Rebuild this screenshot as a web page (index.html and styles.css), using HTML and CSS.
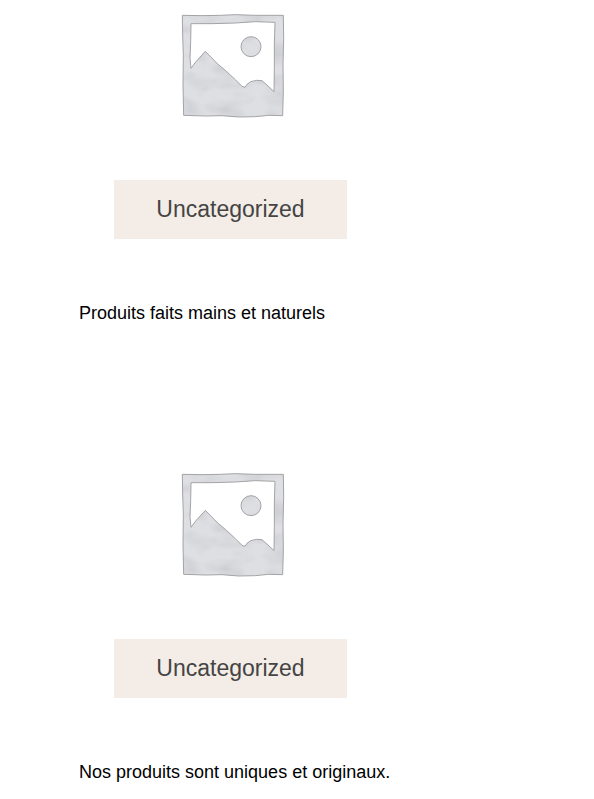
FILE: index.html
```
<!DOCTYPE html>
<html lang="fr">
<head>
<meta charset="utf-8">
<meta name="viewport" content="width=device-width, initial-scale=1">
<title>Produits</title>
<link rel="stylesheet" href="styles.css">
</head>
<body>
<svg class="defs" width="0" height="0" aria-hidden="true">
  <defs>
    <filter id="wash" x="0" y="0" width="100%" height="100%" color-interpolation-filters="sRGB">
      <feTurbulence type="fractalNoise" baseFrequency="0.014 0.024" numOctaves="2" seed="4" result="noise"/>
      <feColorMatrix in="noise" type="matrix" values="0 0 0 0 0.8  0 0 0 0 0.805  0 0 0 0 0.825  2 0 0 0 -0.8" result="cloud"/>
      <feComposite in="cloud" in2="SourceGraphic" operator="in" result="tint"/>
      <feMerge><feMergeNode in="SourceGraphic"/><feMergeNode in="tint"/></feMerge>
    </filter>
    <symbol id="placeholder" viewBox="12 27 327 312">
      <g fill="#dedfe3" fill-rule="evenodd" filter="url(#wash)">
        <path d="M31 31 L90 32 L145 31 L190 29 L250 31 L334 31 L335 100 L333 180 L334 260 L332 332 L290 331 L250 335 L200 336 L150 332 L100 333 L35 331 L33 240 L34 150 L32 90 Z M57 56 L56 110 L54 160 L57 190 L71 171 L100 139 L137 177 L160 196 L190 224 L210 244 L219 247 L225 238 L236 230 L254 226 L270 227 L288 243 L306 260 L307 190 L307 120 L309 52 L250 50 L190 54 L120 56 Z"/>
        <circle cx="237" cy="125" r="30"/>
      </g>
      <g fill="none" stroke="#a4a4a7" stroke-width="3" stroke-linejoin="round">
        <path d="M31 31 L90 32 L145 31 L190 29 L250 31 L334 31 L335 100 L333 180 L334 260 L332 332 L290 331 L250 335 L200 336 L150 332 L100 333 L35 331 L33 240 L34 150 L32 90 Z"/>
        <path d="M57 56 L56 110 L54 160 L57 190 L71 171 L100 139 L137 177 L160 196 L190 224 L210 244 L219 247 L225 238 L236 230 L254 226 L270 227 L288 243 L306 260 L307 190 L307 120 L309 52 L250 50 L190 54 L120 56 Z"/>
        <circle cx="237" cy="125" r="30"/>
      </g>
    </symbol>
  </defs>
</svg>
<main class="products">
  <article class="product">
    <svg class="picture" role="img" aria-label="Uncategorized"><use href="#placeholder"/></svg>
    <a class="category" href="#">Uncategorized</a>
    <p class="caption">Produits faits mains et naturels</p>
  </article>
  <article class="product">
    <svg class="picture" role="img" aria-label="Uncategorized"><use href="#placeholder"/></svg>
    <a class="category" href="#">Uncategorized</a>
    <p class="caption">Nos produits sont uniques et originaux.</p>
  </article>
</main>
</body>
</html>
```
FILE: styles.css
```
* {
  box-sizing: border-box;
}

body {
  margin: 0;
  background: #fff;
  color: #000;
  font-family: "Liberation Sans", Arial, sans-serif;
}

.defs {
  display: block;
}

.products {
  display: flex;
  flex-direction: column;
  gap: 147px;
  max-width: 382px;
  padding: 14px 0 14px 79px;
}

.product {
  display: flex;
  flex-direction: column;
  align-items: center;
}

.picture {
  display: block;
  width: 109px;
  height: 104px;
}

.category {
  align-self: stretch;
  margin: 62px 35px 0;
  padding: 16px 12px;
  background: #f4ece6;
  color: #444;
  font-size: 23px;
  line-height: 27px;
  text-align: center;
  text-decoration: none;
}

.caption {
  align-self: stretch;
  margin: 61px 0 0;
  font-size: 18px;
  line-height: 26px;
  white-space: nowrap;
}
```
